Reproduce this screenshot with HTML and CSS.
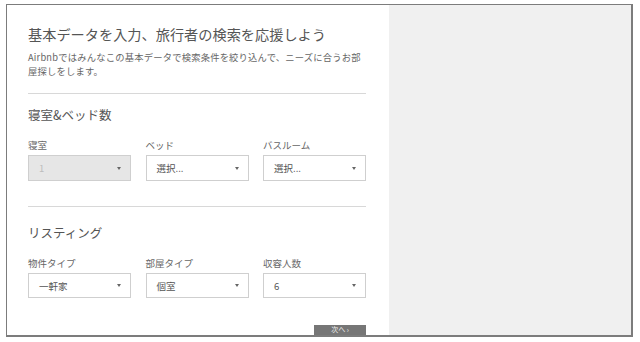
FILE: index.html
```html
<!DOCTYPE html>
<html lang="ja">
<head>
<meta charset="utf-8">
<link rel="stylesheet" href="styles.css">
</head>
<body>
<div class="frame">
  <div class="form">
    <h1 class="title">基本データを入力、旅行者の検索を応援しよう</h1>
    <p class="lead">Airbnbではみんなこの基本データで検索条件を絞り込んで、ニーズに合うお部屋探しをします。</p>
    <div class="rule rule-first"></div>
    <h2 class="heading">寝室&amp;ベッド数</h2>
    <div class="fields">
      <div class="field">
        <div class="label">寝室</div>
        <div class="select disabled"><span>1</span><i class="caret"></i></div>
      </div>
      <div class="field">
        <div class="label">ベッド</div>
        <div class="select"><span>選択...</span><i class="caret"></i></div>
      </div>
      <div class="field">
        <div class="label">バスルーム</div>
        <div class="select"><span>選択...</span><i class="caret"></i></div>
      </div>
    </div>
    <div class="rule rule-second"></div>
    <h2 class="heading heading-second">リスティング</h2>
    <div class="fields fields-second">
      <div class="field">
        <div class="label">物件タイプ</div>
        <div class="select short"><span>一軒家</span><i class="caret"></i></div>
      </div>
      <div class="field">
        <div class="label">部屋タイプ</div>
        <div class="select short"><span>個室</span><i class="caret"></i></div>
      </div>
      <div class="field">
        <div class="label">収容人数</div>
        <div class="select short"><span>6</span><i class="caret"></i></div>
      </div>
    </div>
    <div class="actions">
      <button class="next">次へ ›</button>
    </div>
  </div>
  <div class="side"></div>
</div>
</body>
</html>
```

FILE: styles.css
```css
html, body {
  margin: 0;
  padding: 0;
  background: #ffffff;
}
body {
  font-family: "Noto Sans CJK JP", "Noto Sans", "Liberation Sans", sans-serif;
  color: #555;
}
.frame {
  margin: 4px 0 0 6px;
  width: 624px;
  height: 330px;
  border: 1px solid #7c7c7c;
  border-bottom-width: 2px;
  border-right-width: 2px;
  display: flex;
  overflow: hidden;
  background: #fff;
}
.form {
  width: 338px;
  padding: 19px 23px 0 21px;
  flex: none;
  display: flex;
  flex-direction: column;
}
.side {
  flex: 1;
  background: #f0f0f0;
}
.title {
  margin: 0;
  font-size: 14.2px;
  line-height: 20px;
  font-weight: 400;
  color: #555;
  white-space: nowrap;
}
.lead {
  margin: 6px 0 0;
  font-size: 9.3px;
  letter-spacing: 0.2px;
  line-height: 14px;
  color: #666;
}
.rule {
  height: 1px;
  background: #d8d8d8;
  flex: none;
}
.rule-first {
  margin-top: 15px;
}
.rule-second {
  margin-top: 25px;
}
.heading {
  margin: 12px 0 0;
  font-size: 12.5px;
  line-height: 18px;
  font-weight: 400;
  color: #555;
}
.heading-second {
  margin-top: 17px;
}
.fields {
  margin-top: 14px;
  display: grid;
  grid-template-columns: repeat(3, 1fr);
  column-gap: 14.5px;
}
.fields-second {
  margin-top: 14px;
}
.label {
  font-size: 9.5px;
  line-height: 14px;
  color: #666;
}
.select {
  margin-top: 3px;
  height: 24px;
  border: 1px solid #cfcfcf;
  background: #fff;
  display: flex;
  align-items: center;
  justify-content: space-between;
  padding: 0 9px 0 10px;
  font-size: 9.5px;
  color: #555;
}
.select.short {
  height: 23px;
}
.select.disabled {
  background: #e6e6e6;
  color: #bdbdbd;
}
.caret {
  width: 0;
  height: 0;
  border-left: 2.5px solid transparent;
  border-right: 2.5px solid transparent;
  border-top: 3px solid #666;
}
.actions {
  margin-top: 27px;
  flex: 1;
  min-height: 0;
  display: flex;
  justify-content: flex-end;
}
.next {
  width: 52px;
  border: 0;
  background: #767676;
  color: #f2f2f2;
  font-family: inherit;
  font-size: 7px;
  line-height: 7px;
  padding: 1px 0 0;
  display: flex;
  align-items: flex-start;
  justify-content: center;
}
```
